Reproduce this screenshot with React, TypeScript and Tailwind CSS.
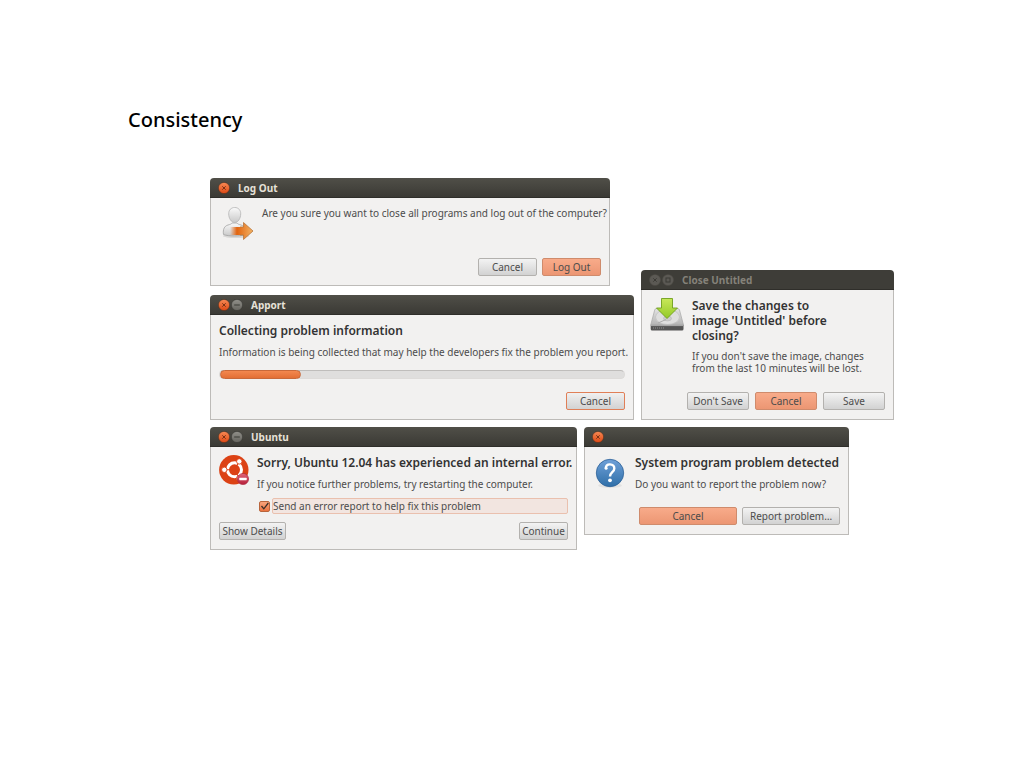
import { useState, type ReactNode } from 'react';

type ControlKind = 'close' | 'minimize' | 'maximize';

function WindowControl({ kind, active = true }: { kind: ControlKind; active?: boolean }) {
  const orange = kind === 'close' && active;
  const fill = orange ? 'url(#control-orange)' : active ? 'url(#control-grey)' : '#5b5954';
  const stroke = orange ? '#4a2c1c' : active ? '#33322e' : '#4a4943';
  const mark = orange ? '#7a3216' : '#3b3a35';
  return (
    <button type="button" aria-label={kind} className="block size-3 shrink-0">
      <svg viewBox="0 0 12 12" className="size-3">
        <circle cx="6" cy="6" r="5.6" fill={fill} stroke={stroke} strokeWidth="0.5" />
        {kind === 'close' && <path d="M4.3 4.3 7.700 7.700M7.700 4.3 4.3 7.700" stroke={mark} strokeWidth="1" />}
        {kind === 'minimize' && <path d="M3.2 6h5.6" stroke={mark} strokeWidth="1" />}
        {kind === 'maximize' && <rect x="4" y="4" width="4" height="4" fill="none" stroke={mark} strokeWidth="1" />}
      </svg>
    </button>
  );
}

function Dialog({
  title,
  controls,
  active = true,
  className,
  children,
}: {
  title: string;
  controls: ControlKind[];
  active?: boolean;
  className: string;
  children: ReactNode;
}) {
  return (
    <section aria-label={title || 'System problem'} className={`flex flex-col ${className}`}>
      <header
        className={`flex h-5 items-center gap-px rounded-t border-b border-[#2f2e2a] pl-2 ${
          active ? 'bg-linear-to-b from-[#504f48] to-[#3b3a35]' : 'bg-[#3e3d38]'
        }`}
      >
        {controls.map((kind) => (
          <WindowControl key={kind} kind={kind} active={active} />
        ))}
        <h2 className={`pl-[7px] text-[10px] leading-4 font-bold ${active ? 'text-[#e6e1d8]' : 'text-[#85827a]'}`}>
          {title}
        </h2>
      </header>
      <div className="flex grow flex-col border border-t-0 border-[#bdbbb8] bg-[#f2f1f0] px-2 pt-2 pb-[9px]">
        {children}
      </div>
    </section>
  );
}

const buttonStyles = {
  plain: 'border-[#b3b1ae] from-[#f3f3f3] to-[#d2d2d2]',
  focus: 'border-[#e07f57] from-[#f0f0f0] to-[#d2d2d2]',
  primary: 'border-[#cf8b6c] from-[#f8ab8a] to-[#ec9673]',
};

function Button({
  kind = 'plain',
  className = '',
  children,
}: {
  kind?: keyof typeof buttonStyles;
  className?: string;
  children: ReactNode;
}) {
  return (
    <button
      type="button"
      className={`flex h-[18px] items-center justify-center rounded-xs border bg-linear-to-b text-[10px] leading-4 whitespace-nowrap text-[#4c4c4c] ${buttonStyles[kind]} ${className}`}
    >
      {children}
    </button>
  );
}

function Headline({ children }: { children: ReactNode }) {
  return <h3 className="text-[12px] leading-[15px] font-semibold text-[#333333]">{children}</h3>;
}

function Message({ children }: { children: ReactNode }) {
  return <p className="text-[10px] leading-[14px] text-[#4c4c4c]">{children}</p>;
}

function LogOutIcon() {
  return (
    <svg viewBox="0 0 32 34" className="h-[34px] w-8 shrink-0" aria-hidden="true">
      <ellipse cx="14" cy="30" rx="13" ry="2" fill="#000" opacity="0.1" />
      <path
        d="M1.5 28.5c-.8-5 .8-8.500 4.500-9.500 2-.5 3.500-1 4-2h5c.6 1 2 1.500 4 2 3.500 1 4.500 4 4.500 9.500-5 2-17 2-22 0z"
        fill="url(#person)"
        stroke="#a3a3a3"
        strokeWidth="0.8"
      />
      <path
        d="M12.700 1.500c3.700 0 6 2.600 6 6.300 0 4.600-2.600 8.700-6 8.700s-6-4.100-6-8.700c0-3.700 2.300-6.300 6-6.300z"
        fill="url(#person)"
        stroke="#b4b4b4"
        strokeWidth="0.8"
      />
      <path d="M8 21h13.500v-4.500L31 25l-9.500 8.500V29H8z" fill="url(#arrow)" />
      <path d="M18 21h3.500v-4.500L31 25l-9.500 8.500V29H18" fill="none" stroke="#b8763b" strokeWidth="0.8" />
    </svg>
  );
}

function DriveIcon() {
  return (
    <svg viewBox="0 0 34 34" className="size-[34px] shrink-0" aria-hidden="true">
      <path d="M6.500 10.500h21q1.500 0 2 1.500l4 15H.7l4-15q.4-1.500 1.800-1.500z" fill="url(#drive)" stroke="#a6a6a6" strokeWidth="0.7" />
      <ellipse cx="17.500" cy="19" rx="12" ry="7.500" fill="#dedede" stroke="#c2c2c2" strokeWidth="0.800" />
      <ellipse cx="17.500" cy="20.500" rx="4" ry="2.400" fill="#cdcdcd" stroke="#b5b5b5" strokeWidth="0.600" />
      <path d="M8 25l8-3.500" stroke="#adadad" strokeWidth="1" />
      <path d="M.7 27h32.800v4q0 1.500-1.500 1.500H2.200Q.7 32.500.7 31z" fill="#555" />
      <path d="M1 27.500h32" stroke="#a6a6a6" strokeWidth="1.200" />
      <path d="M3 30h11" stroke="#929292" strokeWidth="1" strokeDasharray="1 1" />
      <path d="M11.500 0.500h11v9.500h5L17 20.500 6.500 10h5z" fill="url(#green)" stroke="#6f9f1c" strokeWidth="0.9" />
    </svg>
  );
}

function UbuntuIcon() {
  return (
    <svg viewBox="0 0 30 30" className="size-[30px] shrink-0" aria-hidden="true">
      <circle cx="14.800" cy="14.800" r="14.700" fill="#dc4215" />
      <circle cx="15.500" cy="14.800" r="7" fill="none" stroke="#fff" strokeWidth="3" />
      <path d="M15.500 14.800H4M15.500 14.800l5.500-9.500M15.500 14.800l5.500 9.500" stroke="#dc4215" strokeWidth="1.100" />
      {[
        [5.3, 14.8],
        [20.3, 6.4],
        [20.3, 23.2],
      ].map(([cx, cy]) => (
        <circle key={`${cx}-${cy}`} cx={cx} cy={cy} r="2.700" fill="#fff" stroke="#dc4215" strokeWidth="0.900" />
      ))}
      <circle cx="24" cy="24" r="5.600" fill="url(#badge)" stroke="#a8243a" strokeWidth="0.600" />
      <rect x="20.300" y="22.800" width="7.400" height="2.400" rx="0.400" fill="#fff" />
    </svg>
  );
}

function QuestionIcon() {
  return (
    <svg viewBox="0 0 30 32" className="h-8 w-[30px] shrink-0" aria-hidden="true">
      <ellipse cx="15" cy="28.500" rx="12" ry="2.500" fill="#000" opacity="0.06" />
      <circle cx="15" cy="16" r="13.700" fill="url(#blue)" stroke="#2f6298" strokeWidth="0.8" />
      <path
        d="M10.800 11.200c.2-2.900 2.100-3.900 4.200-3.800 2.900.1 4.300 1.700 4.300 4 0 3.800-4.300 3.900-4.300 8.200"
        fill="none"
        stroke="#fff"
        strokeWidth="2.400"
      />
      <circle cx="11.100" cy="11.300" r="1.500" fill="#fff" />
      <circle cx="15" cy="23.300" r="1.900" fill="#fff" />
    </svg>
  );
}

function Gradient({ id, from, to }: { id: string; from: string; to: string }) {
  return (
    <linearGradient id={id} x1="0" y1="0" x2="0" y2="1">
      <stop offset="0" stopColor={from} />
      <stop offset="1" stopColor={to} />
    </linearGradient>
  );
}

function SharedGradients() {
  return (
    <svg className="absolute size-0" aria-hidden="true">
      <defs>
        <Gradient id="control-orange" from="#f88a55" to="#dd4814" />
        <Gradient id="control-grey" from="#91908a" to="#65645e" />
        <Gradient id="person" from="#fafafa" to="#c9c9c9" />
        <Gradient id="drive" from="#e4e4e4" to="#b4b4b4" />
        <Gradient id="green" from="#c8e85a" to="#93c926" />
        <Gradient id="badge" from="#e0667a" to="#b51f39" />
        <Gradient id="blue" from="#6fa0d8" to="#2f6fa8" />
        <linearGradient id="arrow">
          <stop offset="0" stopColor="#e06a1c" stopOpacity="0" />
          <stop offset="0.3" stopColor="#e2640f" />
          <stop offset="1" stopColor="#f2b365" />
        </linearGradient>
      </defs>
    </svg>
  );
}

export default function App() {
  const [sendReport, setSendReport] = useState(true);
  const progress = 20;

  return (
    <main className="relative min-h-screen bg-white px-32 pt-[106px] font-['Noto_Sans','Open_Sans',sans-serif]">
      <SharedGradients />
      <h1 className="text-[20px] leading-7 font-medium text-black">Consistency</h1>

      <div className="mt-11 ml-[82px] flex flex-col gap-[7px]">
        <div className="flex items-end gap-[7px]">
          <div className="flex shrink-0 flex-col gap-[9px]">
            <Dialog title="Log Out" controls={['close']} className="w-[400px]">
              <div className="flex gap-2 pl-[3px]">
                <LogOutIcon />
                <div className="whitespace-nowrap">
                  <Message>Are you sure you want to close all programs and log out of the computer?</Message>
                </div>
              </div>
              <div className="mt-[18px] flex justify-end gap-[5px]">
                <Button className="w-[59px]">Cancel</Button>
                <Button kind="primary" className="w-[59px]">
                  Log Out
                </Button>
              </div>
            </Dialog>

            <Dialog title="Apport" controls={['close', 'minimize']} className="w-[424px]">
              <div className="flex flex-col gap-[7px] whitespace-nowrap">
                <Headline>Collecting problem information</Headline>
                <Message>Information is being collected that may help the developers fix the problem you report.</Message>
              </div>
              <div
                role="progressbar"
                aria-label="Collecting problem information"
                aria-valuenow={progress}
                className="mt-[11px] h-[9px] rounded-full border border-[#dddbd9] border-t-[#bfbdbb] bg-[#dfdedd]"
              >
                <div
                  className="-mt-px h-[9px] rounded-full border border-[#c9693a] bg-linear-to-b from-[#f3884f] to-[#e36f35]"
                  style={{ width: `${progress}%` }}
                />
              </div>
              <div className="mt-[13px] flex justify-end">
                <Button kind="focus" className="w-[59px]">
                  Cancel
                </Button>
              </div>
            </Dialog>
          </div>

          <Dialog title="Close Untitled" controls={['close', 'maximize']} active={false} className="w-[253px] shrink-0">
            <div className="flex gap-2">
              <DriveIcon />
              <div className="flex flex-col gap-[7px] whitespace-nowrap">
                <Headline>
                  Save the changes to
                  <br />
                  image 'Untitled' before
                  <br />
                  closing?
                </Headline>
                <p className="text-[10px] leading-3 text-[#4c4c4c]">
                  If you don't save the image, changes
                  <br />
                  from the last 10 minutes will be lost.
                </p>
              </div>
            </div>
            <div className="mt-[18px] flex justify-end gap-1.5">
              <Button className="w-[62px]">Don't Save</Button>
              <Button kind="primary" className="w-[62px]">
                Cancel
              </Button>
              <Button className="w-[62px]">Save</Button>
            </div>
          </Dialog>
        </div>

        <div className="flex items-start gap-[7px]">
          <Dialog title="Ubuntu" controls={['close', 'minimize']} className="w-[367px] shrink-0">
            <div className="flex gap-2">
              <UbuntuIcon />
              <div className="flex min-w-0 grow flex-col gap-[7px] whitespace-nowrap">
                <Headline>Sorry, Ubuntu 12.04 has experienced an internal error.</Headline>
                <Message>If you notice further problems, try restarting the computer.</Message>
                <div className="flex items-center gap-0.5 pl-0.5">
                  <span className="grid size-[11px] shrink-0">
                    <input
                      id="send-report"
                      type="checkbox"
                      checked={sendReport}
                      onChange={(event) => setSendReport(event.target.checked)}
                      className="col-start-1 row-start-1 size-[11px] appearance-none rounded-xs border border-[#b9653c] bg-linear-to-b from-[#f8a47c] to-[#ea7440]"
                    />
                    {sendReport && (
                      <svg viewBox="0 0 11 11" className="pointer-events-none col-start-1 row-start-1 size-[11px]">
                        <path d="M2.500 5 4.800 7.800 9.300 2" fill="none" stroke="#3b3029" strokeWidth="1.300" />
                      </svg>
                    )}
                  </span>
                  <label
                    htmlFor="send-report"
                    className="grow rounded-xs border border-[#eac0ae] bg-[#f2e5e0] text-[10px] leading-[14px] text-[#4c4c4c]"
                  >
                    Send an error report to help fix this problem
                  </label>
                </div>
              </div>
            </div>
            <div className="mt-2 flex justify-between">
              <Button className="w-[67px]">Show Details</Button>
              <Button className="w-[49px]">Continue</Button>
            </div>
          </Dialog>

          <Dialog title="" controls={['close']} className="w-[265px] shrink-0">
            <div className="flex gap-2.5 pl-0.5">
              <div className="pt-0.5">
                <QuestionIcon />
              </div>
              <div className="flex flex-col gap-[7px] whitespace-nowrap">
                <Headline>System program problem detected</Headline>
                <Message>Do you want to report the problem now?</Message>
              </div>
            </div>
            <div className="mt-4 flex justify-end gap-[5px]">
              <Button kind="primary" className="w-[98px]">
                Cancel
              </Button>
              <Button className="w-[98px]">Report problem…</Button>
            </div>
          </Dialog>
        </div>
      </div>
    </main>
  );
}
